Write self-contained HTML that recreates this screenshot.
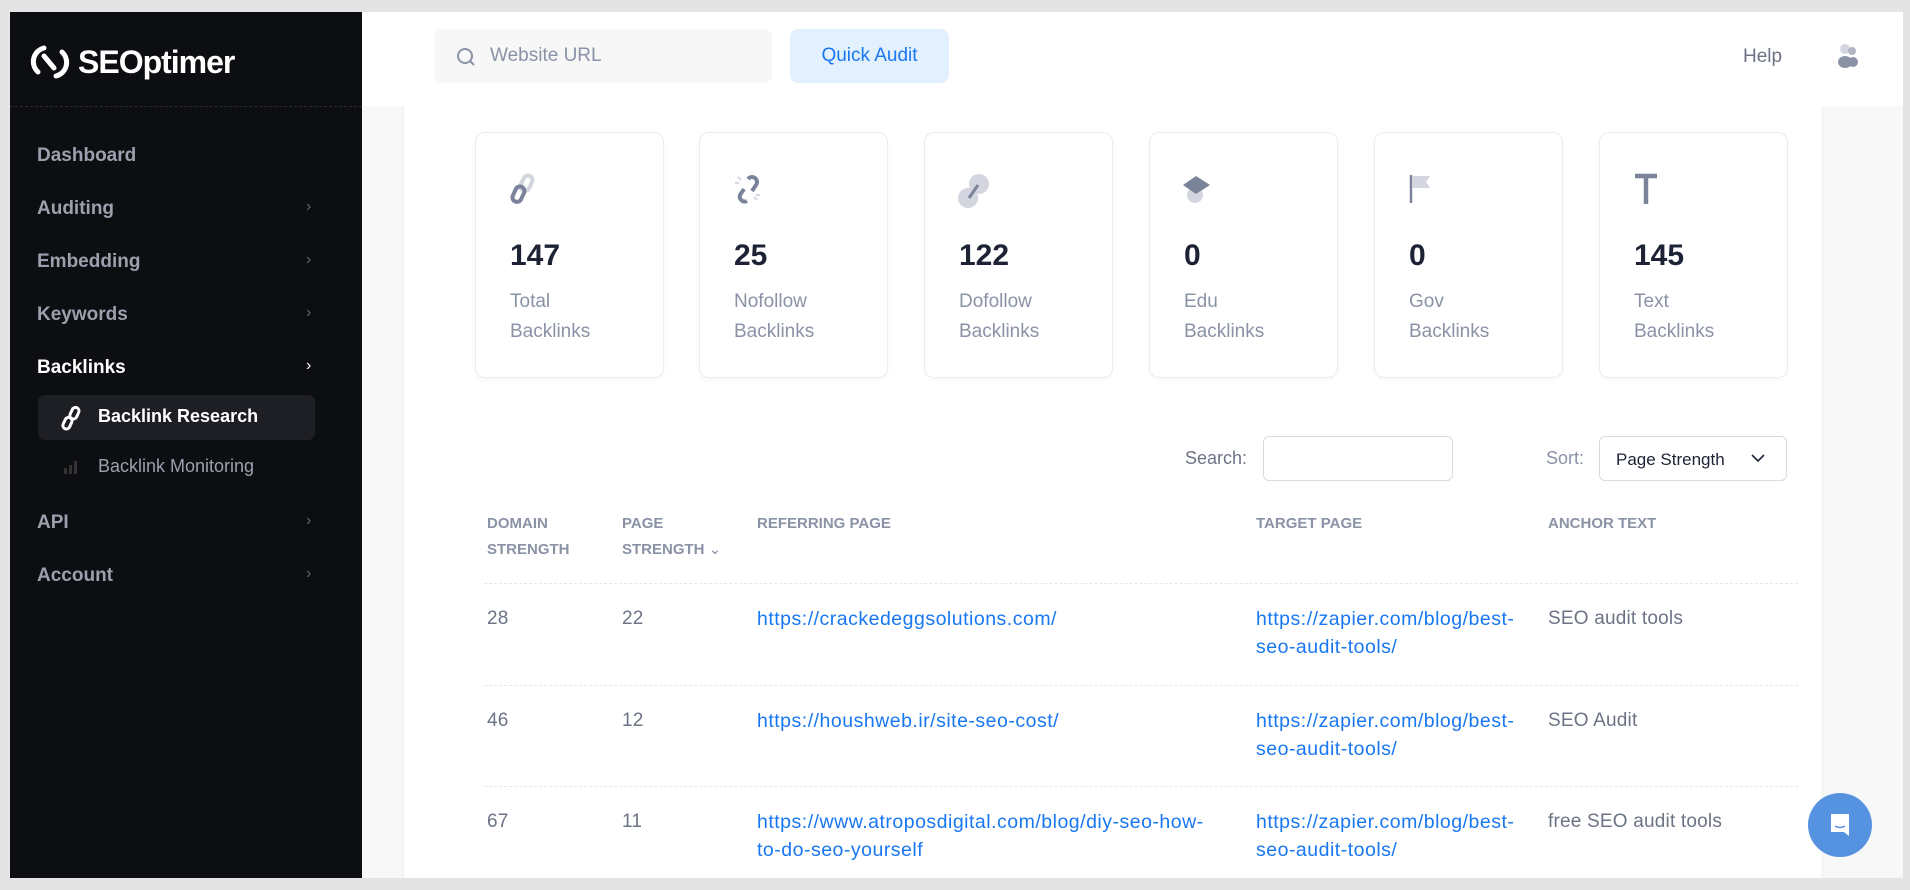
<!DOCTYPE html>
<html><head><meta charset="utf-8"><style>
*{box-sizing:border-box;margin:0;padding:0}
body{width:1910px;height:890px;background:#e4e4e4;font-family:"Liberation Sans",sans-serif;position:relative;overflow:hidden}
.frame{position:absolute;left:10px;top:12px;width:1893px;height:866px;background:#f8f8f9;overflow:hidden}
.side{position:absolute;left:0;top:0;width:352px;height:866px;background:#0d0e12}
.logo{position:absolute;left:20px;top:28px;color:#fff;font-weight:700;font-size:32px;letter-spacing:-1px;display:flex;align-items:center;gap:8px}
.div{position:absolute;left:0;top:94px;width:352px;border-top:1px dashed #2a2b30}
.mi{position:absolute;left:27px;color:#9ba0ad;font-size:19px;font-weight:700}
.ch{position:absolute;left:296px;color:#5d616c;font-size:16px}
.hdr{position:absolute;left:352px;top:0;width:1541px;height:94px;background:#fff}
.inp{position:absolute;left:72px;top:17px;width:338px;height:54px;background:#f7f7f8;border-radius:8px;color:#8a92a6;font-size:19px;padding:16px 0 0 56px}
.qa{position:absolute;left:428px;top:17px;width:159px;height:54px;background:#e3f0fd;border-radius:8px;color:#1877f2;font-size:19px;text-align:center;line-height:54px}
.panel{position:absolute;left:393px;top:94px;width:1420px;height:780px;background:#fff;border-left:1px solid #eee;border-right:1px solid #eee}
.card{position:absolute;top:120px;width:189px;height:246px;border:1px solid #ececf0;border-radius:10px;background:#fff;box-shadow:0 2px 4px rgba(0,0,0,.03)}
.card svg{position:absolute;left:32px;top:40px}
.num{position:absolute;left:34px;top:106px;font-size:30px;font-weight:700;color:#1d2235}
.lab{position:absolute;left:34px;top:154px;font-size:19px;color:#8a92a6;line-height:30px}
.th{position:absolute;font-size:15px;font-weight:700;color:#8a92a6;line-height:26px}
.td{position:absolute;font-size:19px;color:#6c7385;line-height:28px;letter-spacing:.2px}
.a{position:absolute;font-size:19.5px;color:#1877f2;line-height:28px;letter-spacing:.5px}
.hr{position:absolute;left:474px;width:1314px;border-top:1px dashed #e6e7ea}
</style></head><body>
<div class="frame">
<div class="side">
 <div class="logo"><svg width="40" height="44" viewBox="0 0 40 44"><g fill="none" stroke="#fff" stroke-width="5" stroke-linecap="round"><path d="M14 8 A14 14 0 0 0 8 32"/><path d="M26 36 A14 14 0 0 0 32 12"/><path d="M14 16 L24 28"/></g></svg>SEOptimer</div>
 <div class="div"></div>
 <div class="mi" style="top:133px">Dashboard</div>
 <div class="mi" style="top:186px">Auditing</div><div class="ch" style="top:186px">›</div>
 <div class="mi" style="top:239px">Embedding</div><div class="ch" style="top:239px">›</div>
 <div class="mi" style="top:292px">Keywords</div><div class="ch" style="top:292px">›</div>
 <div class="mi" style="top:345px;color:#fff">Backlinks</div><div class="ch" style="top:345px;color:#fff">›</div>
 <div style="position:absolute;left:28px;top:383px;width:277px;height:45px;background:#1e1f24;border-radius:7px"></div>
 <svg style="position:absolute;left:50px;top:393px" width="22" height="26" viewBox="0 0 22 26"><g fill="none" stroke="#fff" stroke-width="3"><rect x="11" y="2" width="7" height="12" rx="3.5" transform="rotate(25 14 8)"/><rect x="4" y="12" width="7" height="12" rx="3.5" transform="rotate(25 7 18)"/></g></svg>
 <div class="mi" style="left:88px;top:394px;font-size:18px;color:#fff">Backlink Research</div>
 <svg style="position:absolute;left:53px;top:447px" width="16" height="16"><rect x="1" y="9" width="3" height="6" fill="#333"/><rect x="6" y="6" width="3" height="9" fill="#333"/><rect x="11" y="2" width="3" height="13" fill="#333"/></svg>
 <div class="mi" style="left:88px;top:444px;font-size:18px;font-weight:400;color:#9ba0ad">Backlink Monitoring</div>
 <div class="mi" style="top:500px">API</div><div class="ch" style="top:500px">›</div>
 <div class="mi" style="top:553px">Account</div><div class="ch" style="top:553px">›</div>
</div>
<div class="hdr">
 <div class="inp">Website URL</div>
 <svg style="position:absolute;left:94px;top:35px" width="20" height="20"><circle cx="9" cy="9" r="7" fill="none" stroke="#8a92a6" stroke-width="2"/><path d="M14 14l4 4" stroke="#8a92a6" stroke-width="2"/></svg>
 <div class="qa">Quick Audit</div>
 <div style="position:absolute;left:1381px;top:34px;font-size:19px;color:#6c7385">Help</div>
 <svg style="position:absolute;left:1474px;top:31px" width="24" height="26"><circle cx="9" cy="6" r="5" fill="#d3d6de"/><circle cx="16" cy="8" r="4" fill="#b0b5c2"/><ellipse cx="9" cy="19" rx="7" ry="6" fill="#8a92a6"/><ellipse cx="17" cy="19" rx="5" ry="5" fill="#8a92a6"/></svg>
</div>
<div class="panel"></div>
<div class="card" style="left:465px"><svg width="30" height="32" viewBox="0 0 30 32"><g fill="none" stroke-width="4"><rect x="14" y="2" width="9" height="16" rx="4.5" transform="rotate(25 18 10)" stroke="#d3d6de"/><rect x="6" y="13" width="9" height="16" rx="4.5" transform="rotate(25 10 21)" stroke="#7a839a"/></g></svg><div class="num">147</div><div class="lab">Total<br>Backlinks</div></div>
<div class="card" style="left:689px"><svg width="30" height="32" viewBox="0 0 30 32"><g fill="none" stroke-width="4" stroke="#7a839a"><path d="M16 6 A5 5 0 0 1 24 12 L20 18"/><path d="M12 16 L8 22 A5 5 0 0 0 15 28"/></g><g stroke="#d3d6de" stroke-width="2"><path d="M6 4l3 3M3 10h4M22 24l3 3M24 22h4"/></g></svg><div class="num">25</div><div class="lab">Nofollow<br>Backlinks</div></div>
<div class="card" style="left:914px"><svg width="34" height="36" viewBox="0 0 34 36"><g fill="#d3d6de"><circle cx="22" cy="11" r="10"/><circle cx="11" cy="25" r="10"/></g><path d="M12 25 L21 12" stroke="#7a839a" stroke-width="3"/></svg><div class="num">122</div><div class="lab">Dofollow<br>Backlinks</div></div>
<div class="card" style="left:1139px"><svg width="30" height="32" viewBox="0 0 30 32"><rect x="5" y="14" width="16" height="16" rx="8" fill="#d3d6de"/><path d="M13 3 L27 12 L13 21 L0 12 Z" fill="#7a839a" transform="translate(1 0)"/></svg><div class="num">0</div><div class="lab">Edu<br>Backlinks</div></div>
<div class="card" style="left:1364px"><svg width="30" height="32" viewBox="0 0 30 32"><path d="M4 2v28" stroke="#7a839a" stroke-width="2.5"/><path d="M5 3h18l-4 6 4 6H5z" fill="#d3d6de"/></svg><div class="num">0</div><div class="lab">Gov<br>Backlinks</div></div>
<div class="card" style="left:1589px"><svg width="30" height="32" viewBox="0 0 30 32"><path d="M3 3h22M14 3v28" stroke="#7a839a" stroke-width="4.5"/></svg><div class="num">145</div><div class="lab">Text<br>Backlinks</div></div>
<div style="position:absolute;left:1175px;top:436px;font-size:18px;color:#6c7385">Search:</div>
<div style="position:absolute;left:1253px;top:424px;width:190px;height:45px;border:1px solid #d7dbe5;border-radius:6px;background:#fff"></div>
<div style="position:absolute;left:1536px;top:436px;font-size:18px;color:#8a92a6">Sort:</div>
<div style="position:absolute;left:1589px;top:424px;width:188px;height:45px;border:1px solid #d7dbe5;border-radius:6px;background:#fff;font-size:17px;color:#1d2235;padding:13px 0 0 16px">Page Strength</div>
<svg style="position:absolute;left:1741px;top:441px" width="14" height="10"><path d="M1 2l6 6 6-6" fill="none" stroke="#1d2235" stroke-width="1.6"/></svg>
<div class="th" style="left:477px;top:499px">DOMAIN<br>STRENGTH</div>
<div class="th" style="left:612px;top:499px">PAGE<br>STRENGTH <span style="font-weight:400">⌄</span></div>
<div class="th" style="left:747px;top:499px">REFERRING PAGE</div>
<div class="th" style="left:1246px;top:499px">TARGET PAGE</div>
<div class="th" style="left:1538px;top:499px">ANCHOR TEXT</div>
<div class="hr" style="top:571px"></div>
<div class="hr" style="top:673px"></div>
<div class="hr" style="top:774px"></div>
<div class="td" style="left:477px;top:593px">28</div><div class="td" style="left:612px;top:593px">22</div>
<div class="a" style="left:747px;top:593px">https://crackedeggsolutions.com/</div>
<div class="a" style="left:1246px;top:593px">https://zapier.com/blog/best-<br>seo-audit-tools/</div>
<div class="td" style="left:1538px;top:593px">SEO audit tools</div>
<div class="td" style="left:477px;top:695px">46</div><div class="td" style="left:612px;top:695px">12</div>
<div class="a" style="left:747px;top:695px">https://houshweb.ir/site-seo-cost/</div>
<div class="a" style="left:1246px;top:695px">https://zapier.com/blog/best-<br>seo-audit-tools/</div>
<div class="td" style="left:1538px;top:695px">SEO Audit</div>
<div class="td" style="left:477px;top:796px">67</div><div class="td" style="left:612px;top:796px">11</div>
<div class="a" style="left:747px;top:796px">https://www.atroposdigital.com/blog/diy-seo-how-<br>to-do-seo-yourself</div>
<div class="a" style="left:1246px;top:796px">https://zapier.com/blog/best-<br>seo-audit-tools/</div>
<div class="td" style="left:1538px;top:796px">free SEO audit tools</div>
<div style="position:absolute;left:1798px;top:781px;width:64px;height:64px;border-radius:50%;background:#5592e0"></div>
<svg style="position:absolute;left:1818px;top:800px" width="24" height="26"><path d="M3 2h18v22l-5-4H3z" fill="#fff"/><path d="M7 14q5 3 10 0" stroke="#5592e0" stroke-width="1.6" fill="none"/></svg>
</div>
</body></html>
